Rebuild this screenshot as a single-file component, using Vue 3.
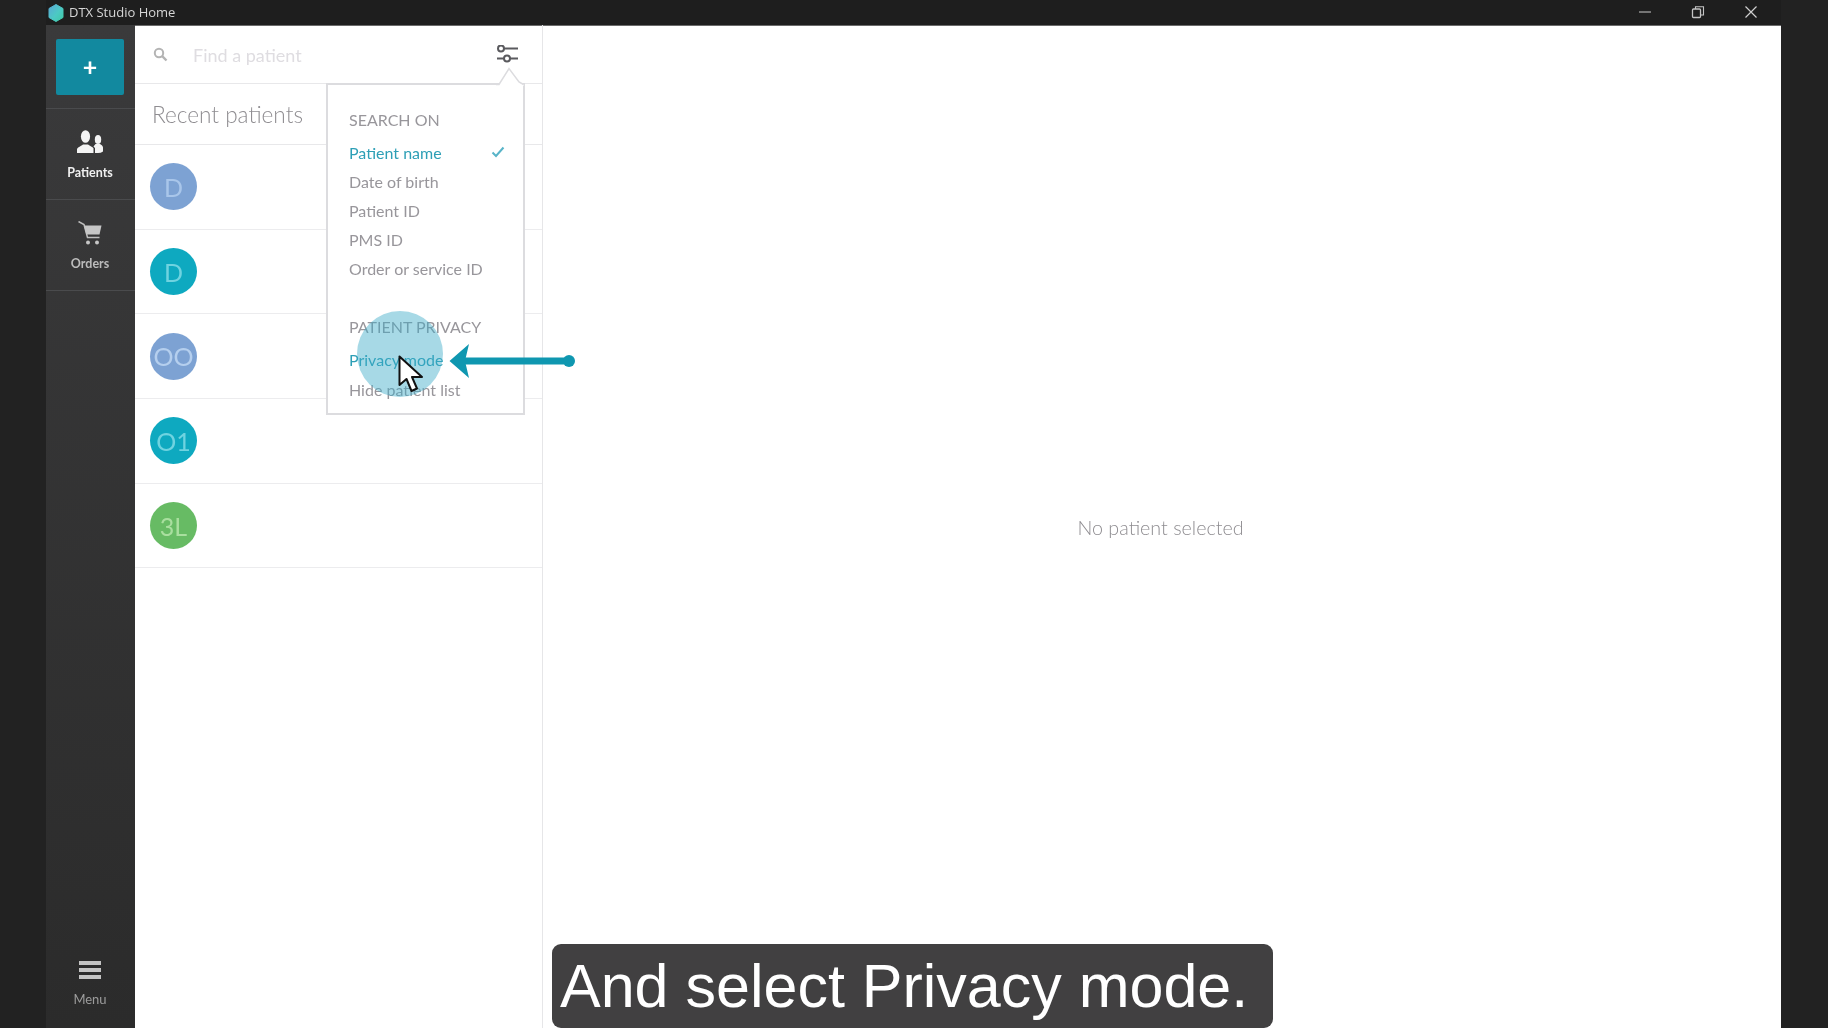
<script setup>
const avatars = [
  { text: 'D', color: '#7da2d3', ink: '#a9c6ea' },
  { text: 'D', color: '#0ea9c0', ink: '#6fd3e0' },
  { text: 'OO', color: '#7da2d3', ink: '#b5cfee' },
  { text: 'O1', color: '#0ea9c0', ink: '#6fd3e0' },
  { text: '3L', color: '#67bb64', ink: '#a9df9f' },
]
const searchOptions = ['Date of birth', 'Patient ID', 'PMS ID', 'Order or service ID']
</script>

<template>
  <div class="screen">
    <div class="window">
      <header class="titlebar">
        <svg class="logo" viewBox="0 0 16 18" width="16" height="18">
          <defs>
            <linearGradient id="logoFill" x1="0" y1="0" x2="1" y2="1">
              <stop offset="0" stop-color="#5aa8d6" />
              <stop offset="0.55" stop-color="#4cc9c4" />
              <stop offset="1" stop-color="#3fc9a4" />
            </linearGradient>
          </defs>
          <path d="M8 0.5 15 4.5V13.5L8 17.5 1 13.5V4.5Z" fill="url(#logoFill)" stroke="url(#logoFill)" stroke-linejoin="round" />
        </svg>
        <span class="app-name">DTX Studio Home</span>
        <div class="controls">
          <svg width="14" height="14" viewBox="0 0 14 14"><path d="M1 7H13" stroke="#c9c9c9" stroke-width="1" fill="none" /></svg>
          <svg width="14" height="14" viewBox="0 0 14 14"><rect x="1.5" y="4" width="8" height="8.5" rx="1" stroke="#c4c4c4" stroke-width="1.3" fill="none" /><path d="M4.5 4V1.8H12.5V10H9.5" stroke="#c4c4c4" stroke-width="1.1" fill="none" /></svg>
          <svg width="14" height="14" viewBox="0 0 14 14"><path d="M1.5 1.5 12.5 12.5M12.5 1.5 1.5 12.5" stroke="#d0d0d0" stroke-width="1.2" fill="none" /></svg>
        </div>
      </header>
      <div class="body">
        <nav class="sidebar">
          <div class="add-wrap"><button class="add">+</button></div>
          <div class="nav-item active">
            <svg width="26" height="24" viewBox="0 0 26 24" fill="#f4f4f4">
              <ellipse cx="8.5" cy="6.5" rx="4.6" ry="6.3" />
              <path d="M0 23V19.5C0 17.5 3.5 16.5 6 14.5H11C13 16 15.5 17 16.5 18.2V23Z" />
              <ellipse cx="21" cy="9.5" rx="3.2" ry="4.5" />
              <path d="M18 23V18L16.5 16.5 18.5 14H23C24.5 15 26 15.8 26 17.5V21.5Q24 23 21 23Z" />
            </svg>
            <span>Patients</span>
          </div>
          <div class="nav-item">
            <svg width="24" height="24" viewBox="0 0 24 24">
              <path d="M0.5 0.5 6 3.6 9.5 16.5H21.5" fill="none" stroke="#bdbdbd" stroke-width="1.5" />
              <path d="M6 4.5H23.5L21.5 13.5H8.3Z" fill="#c6c6c6" />
              <circle cx="10" cy="21.5" r="2" fill="#c6c6c6" />
              <circle cx="19" cy="21.5" r="2" fill="#c6c6c6" />
            </svg>
            <span>Orders</span>
          </div>
          <div class="nav-item menu">
            <svg width="22" height="18" viewBox="0 0 22 18" fill="#c4c4c4">
              <rect y="0" width="22" height="4" />
              <rect y="7" width="22" height="4" />
              <rect y="14" width="22" height="4" />
            </svg>
            <span>Menu</span>
          </div>
        </nav>
        <section class="patients">
          <div class="search">
            <svg class="search-icon" width="15" height="15" viewBox="0 0 15 15"><circle cx="6" cy="6" r="4.2" fill="none" stroke="#b4b4b4" stroke-width="2" /><path d="M9.2 9.2 13.5 13.5" stroke="#b4b4b4" stroke-width="2.4" /></svg>
            <span class="placeholder">Find a patient</span>
            <svg class="filter-icon" width="23" height="19" viewBox="0 0 23 19" fill="none" stroke="#5a5a5e" stroke-width="2">
              <circle cx="5" cy="3.5" r="3" />
              <path d="M8 3.5H22" />
              <circle cx="11" cy="13.5" r="3" />
              <path d="M1 13.5H8M14 13.5H22" />
            </svg>
          </div>
          <h2 class="recent">Recent patients</h2>
          <div v-for="(a, i) in avatars" :key="i" class="row">
            <div class="avatar" :style="{ background: a.color, color: a.ink }">{{ a.text }}</div>
          </div>
        </section>
        <main class="detail">No patient selected</main>
      </div>
    </div>

    <div class="popup">
      <svg class="notch" width="30" height="19" viewBox="0 0 30 19"><path d="M0 17.5H3L13 1.5 23 15.5 27.5 17.5 V19H0Z" fill="#fff" /><path d="M0 17.5H3L13 1.5 23 15 27.5 17.5" fill="none" stroke="#dcdcdf" stroke-width="1.5" /></svg>
      <h3>SEARCH ON</h3>
      <div class="opt selected">Patient name
        <svg class="check" width="14" height="12" viewBox="0 0 14 12"><path d="M1.5 6.5 5 10 12.5 1.5" fill="none" stroke="#58b4c8" stroke-width="2" /></svg>
      </div>
      <div v-for="o in searchOptions" :key="o" class="opt">{{ o }}</div>
      <h3 class="second">PATIENT PRIVACY</h3>
      <div class="opt selected">Privacy mode</div>
      <div class="opt">Hide patient list</div>
    </div>

    <div class="highlight"></div>
    <svg class="arrow" width="126" height="36" viewBox="0 0 126 36">
      <path d="M0.5 18 20 1 16 18 20 35Z" fill="#0f97b0" />
      <rect x="14" y="14.5" width="106" height="7" fill="#0f97b0" />
      <circle cx="120" cy="18" r="6" fill="#0f97b0" />
    </svg>
    <svg class="cursor" width="26" height="38" viewBox="0 0 26 38">
      <path d="M1.5 1.5V30L8.5 24 13.5 36 19 33.5 14 22H24Z" fill="#fff" stroke="#111" stroke-width="2" stroke-linejoin="round" />
    </svg>
    <div class="caption">And select Privacy mode.</div>
  </div>
</template>

<style>
html, body { margin: 0; background: #222; overflow: hidden; }
</style>

<style scoped>
.screen {
  position: relative;
  width: 1828px;
  height: 1028px;
  overflow: hidden;
  background: #222;
  padding: 0 47px 0 46px;
  box-sizing: border-box;
  font-family: Lato, "Open Sans", sans-serif;
  filter: blur(0.45px);
}
.window { height: 100%; display: flex; flex-direction: column; background: #fff; }
.titlebar {
  height: 25px;
  flex: none;
  background: #1e1e1e;
  border-bottom: 1px solid #6a6a6a;
  margin-bottom: -1px;
  box-sizing: content-box;
  display: flex;
  align-items: center;
  color: #d6d6d6;
  font: 13px "Open Sans", sans-serif;
}
.logo { margin-left: 2px; }
.app-name { margin-left: 5px; position: relative; top: -1px; }
.controls { margin-left: auto; display: flex; gap: 39px; margin-right: 23px; align-items: center; position: relative; top: -1px; }
.body { flex: 1; display: flex; min-height: 0; }
.sidebar {
  width: 89px;
  flex: none;
  background: linear-gradient(#3a3a3b, #2b2b2b);
  display: flex;
  flex-direction: column;
}
.add-wrap { height: 84px; padding: 14px 11px 0 10px; box-sizing: border-box; border-bottom: 1px solid #4a4b4d; }
.add {
  display: block;
  width: 68px;
  height: 56px;
  border: 0;
  border-radius: 2px;
  padding: 0 0 3px;
  background: #12899f;
  color: #fff;
  font: 700 25px Lato, sans-serif;
}
.nav-item {
  height: 91px;
  box-sizing: border-box;
  border-bottom: 1px solid #4a4b4d;
  display: flex;
  flex-direction: column;
  align-items: center;
  justify-content: flex-start;
  padding: 21px 1px 0 0;
  gap: 11px;
  color: #bcbcbc;
  font-size: 12.5px;
  font-weight: 700;
}
.nav-item.active { color: #f0f0f0; }
.nav-item.menu {
  margin-top: auto;
  height: 77px;
  border-bottom: 0;
  padding-top: 10px;
  gap: 12px;
  color: #9c9c9c;
  font-size: 13px;
  font-weight: 400;
}
.patients {
  width: 407px;
  flex: none;
  border-right: 1px solid #e6e6e8;
  display: flex;
  flex-direction: column;
}
.search {
  height: 59px;
  flex: none;
  box-sizing: border-box;
  border-bottom: 1px solid #e8e8ea;
  display: flex;
  align-items: center;
  padding: 0 23px 0 18px;
}
.placeholder { margin-left: 25px; font-size: 18px; color: #dfdde1; position: relative; top: 1px; }
.filter-icon { margin-left: auto; }
.recent {
  height: 61px;
  flex: none;
  margin: 0;
  box-sizing: border-box;
  border-bottom: 1px solid #e8e8ea;
  padding-left: 17px;
  line-height: 61px;
  font-size: 22.6px;
  font-weight: 300;
  color: #8f8d91;
}
.row {
  height: 84.7px;
  flex: none;
  box-sizing: border-box;
  border-bottom: 1px solid #ececee;
  display: flex;
  align-items: center;
  padding-left: 15px;
}
.avatar {
  width: 47px;
  height: 47px;
  border-radius: 50%;
  display: flex;
  align-items: center;
  justify-content: center;
  font-size: 25px;
}
.detail {
  flex: 1;
  display: flex;
  align-items: center;
  justify-content: center;
  padding: 2px 3px 0 0;
  font-size: 19.7px;
  font-weight: 300;
  color: #8f8d91;
}
.popup {
  position: absolute;
  left: 326px;
  top: 83px;
  width: 199px;
  height: 332px;
  box-sizing: border-box;
  background: #fff;
  border: 2px solid #dcdcdf;
  padding: 23px 0 0 21px;
  color: #98969b;
  font-size: 16px;
}
.notch { position: absolute; right: -3px; top: -18.5px; }
.popup h3 { margin: 0; height: 24px; line-height: 24px; font-size: 16px; font-weight: 400; margin-bottom: 6px; }
.popup h3.second { margin-top: 32px; margin-bottom: 6px; }
.opt { position: relative; height: 29.1px; line-height: 29px; }
.selected { color: #2d9fb6; }
.check { position: absolute; right: 18px; top: 8px; }
.highlight {
  position: absolute;
  left: 357px;
  top: 311px;
  width: 86px;
  height: 86px;
  border-radius: 50%;
  background: rgba(60, 170, 200, 0.45);
}
.arrow { position: absolute; left: 449px; top: 343px; }
.cursor { position: absolute; left: 398px; top: 355px; }
.caption {
  position: absolute;
  left: 552px;
  top: 944px;
  width: 721px;
  height: 84px;
  box-sizing: border-box;
  border-radius: 9px;
  background: #414041;
  color: #fff;
  padding-left: 8px;
  font: 61px/84px "Liberation Sans", Arial, sans-serif;
  white-space: nowrap;
}
</style>
